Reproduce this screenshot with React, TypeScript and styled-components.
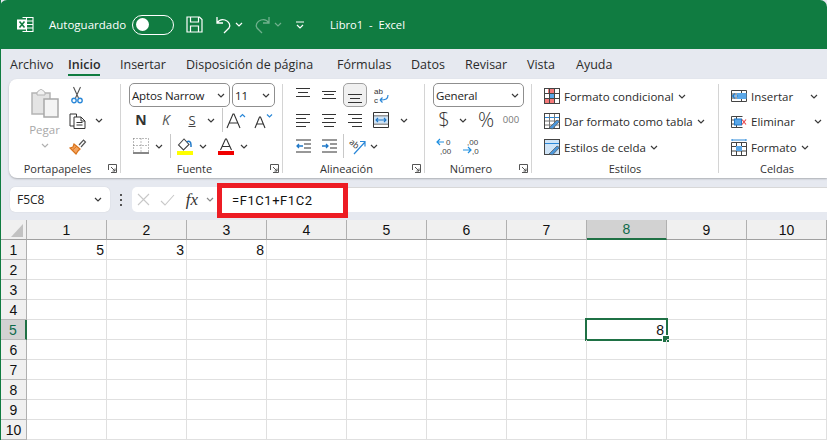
import React from "react";
import styled, { createGlobalStyle } from "styled-components";

const GREEN = "#107c41";
const UI_FONT = `"Open Sans", "Noto Sans", sans-serif`;
const CELL_FONT = `"Liberation Sans", Arial, sans-serif`;

const GlobalStyle = createGlobalStyle`
  html, body { margin: 0; padding: 0; width: 827px; height: 440px; overflow: hidden; background: #fff; }
  * { box-sizing: border-box; }
`;

const Window = styled.div`
  width: 827px;
  height: 440px;
  overflow: hidden;
  display: flex;
  flex-direction: column;
  background: #e6e9f0;
  border-left: 1px solid ${GREEN};
  font-family: ${UI_FONT};
  color: #242424;
`;

/* title bar */
const TitleBar = styled.div`
  height: 49px;
  margin-left: -1px;
  flex: none;
  display: flex;
  align-items: center;
  background: ${GREEN};
  border-radius: 7px 7px 0 0;
  color: #fff;
  padding: 0 0 0 17px;
  font-size: 11.5px;
`;
const AutoLabel = styled.span`
  margin-left: 15px;
  width: 83px;
`;
const Toggle = styled.div`
  width: 42px;
  height: 20px;
  border: 1.5px solid #fff;
  border-radius: 10px;
  padding: 2px 0 0 2.5px;
`;
const Knob = styled.div`
  width: 13px;
  height: 13px;
  border-radius: 50%;
  background: #fff;
`;
const DocTitle = styled.span`
  margin-left: 16px;
  white-space: pre;
  font-size: 11.2px;
`;
const Qat = styled.span<{ $w: number; $dim?: boolean }>`
  width: ${(p) => p.$w}px;
  display: flex;
  justify-content: center;
  opacity: ${(p) => (p.$dim ? 0.4 : 1)};
`;

/* tabs */
const TabRow = styled.div`
  height: 30px;
  flex: none;
  display: flex;
  padding-left: 9px;
  font-size: 12.5px;
`;
const Tab = styled.div<{ $w: number; $active?: boolean }>`
  width: ${(p) => p.$w}px;
  position: relative;
  padding-top: 7px;
  white-space: nowrap;
  font-weight: ${(p) => (p.$active ? 600 : 400)};
  color: #2b2b2b;
  ${(p) =>
    p.$active &&
    `&::after { content: ""; position: absolute; left: 0; width: 32px; top: 25px; height: 2px; background: ${GREEN}; }`}
`;

/* ribbon */
const Ribbon = styled.div`
  height: 99px;
  flex: none;
  margin-left: 8px;
  display: flex;
  background: #fff;
  border-radius: 8px 0 0 8px;
  box-shadow: 0 1px 2px rgba(0, 0, 0, 0.25);
  overflow: hidden;
`;
const Group = styled.div<{ $w: number }>`
  width: ${(p) => p.$w}px;
  flex: none;
  display: flex;
  flex-direction: column;
`;
const GroupBody = styled.div<{ $pl: number }>`
  height: 80px;
  padding: 4px 0 0 ${(p) => p.$pl}px;
`;
const GroupFooter = styled.div`
  height: 19px;
  display: flex;
  align-items: center;
  font-size: 11px;
  color: #333;
`;
const GroupLabel = styled.span`
  flex: 1;
  text-align: center;
  margin-top: -1px;
`;
const Launcher = styled.span`
  width: 14px;
  display: flex;
  padding-left: 2px;
`;
const Divider = styled.div`
  width: 1px;
  flex: none;
  margin: 5px 0;
  background: #d4d4d4;
`;
const Row = styled.div<{ $h?: number }>`
  height: ${(p) => p.$h ?? 26}px;
  display: flex;
  align-items: center;
`;
const Tool = styled.span<{ $w: number; $ml?: number }>`
  width: ${(p) => p.$w}px;
  margin-left: ${(p) => p.$ml ?? 0}px;
  flex: none;
  display: flex;
  align-items: center;
  justify-content: center;
`;
const ToolSep = styled.span<{ $ml?: number; $h?: number }>`
  width: 1px;
  height: ${(p) => p.$h ?? 24}px;
  margin-left: ${(p) => p.$ml ?? 0}px;
  flex: none;
  background: #c8c8c8;
`;
const Combo = styled.div<{ $w: number; $ml?: number }>`
  width: ${(p) => p.$w}px;
  height: 24px;
  margin-left: ${(p) => p.$ml ?? 0}px;
  flex: none;
  display: flex;
  align-items: center;
  justify-content: space-between;
  padding: 0 4px 0 2px;
  border: 1px solid #8f8f8f;
  border-radius: 5px;
  font-size: 11.5px;
  letter-spacing: -0.15px;
  white-space: nowrap;
  color: #222;
`;
const Pressed = styled.span`
  width: 24px;
  height: 24px;
  margin-left: 1px;
  flex: none;
  display: flex;
  align-items: center;
  justify-content: center;
  background: #f0f0f0;
  border: 1px solid #a0a0a0;
  border-radius: 5px;
`;
const ClipGrid = styled.div`
  display: flex;
`;
const PasteCol = styled.div`
  width: 41px;
  display: flex;
  flex-direction: column;
  align-items: center;
  padding-top: 5px;
  color: #a8a8a8;
  font-size: 11.5px;
`;
const PasteLabel = styled.span`
  margin-top: 4px;
  line-height: 16px;
`;
const PasteChevron = styled.span`
  margin-top: 5px;
  display: flex;
`;
const ClipTools = styled.div`
  margin-left: 5px;
  display: flex;
  flex-direction: column;
`;
const StyleRow = styled.div<{ $h?: number }>`
  height: ${(p) => p.$h ?? 26}px;
  display: flex;
  align-items: center;
  gap: 4px;
  font-size: 11.5px;
  white-space: nowrap;
  color: #2b2b2b;
`;
const CellsLabel = styled.span<{ $w: number }>`
  width: ${(p) => p.$w}px;
`;

/* formula bar */
const FormulaBar = styled.div`
  height: 42px;
  flex: none;
  display: flex;
  align-items: flex-start;
  padding: 9px 0 0 9px;
`;
const NameBox = styled.div`
  width: 100px;
  height: 25px;
  flex: none;
  display: flex;
  align-items: center;
  justify-content: space-between;
  padding: 0 8px 0 7px;
  background: #fff;
  border-radius: 5px;
  font-size: 12px;
  box-shadow: 0 0 1px rgba(0, 0, 0, 0.2);
`;
const GripDots = styled.div`
  width: 22px;
  height: 25px;
  flex: none;
  display: flex;
  flex-direction: column;
  align-items: center;
  justify-content: center;
  gap: 3px;
`;
const Dot = styled.span`
  width: 2px;
  height: 2px;
  background: #555;
`;
const FormulaTools = styled.div`
  width: 85px;
  height: 25px;
  flex: none;
  display: flex;
  align-items: center;
  background: #fff;
  border-radius: 5px 0 0 5px;
`;
const FormulaInput = styled.div`
  flex: 1;
  height: 25px;
  position: relative;
  background: #fff;
  border-top: 1px solid #d8d8d8;
`;
const RedBox = styled.div`
  position: absolute;
  left: 0;
  top: -5px;
  width: 131px;
  height: 35px;
  border: 5px solid #ed1c24;
  padding-left: 10px;
  display: flex;
  align-items: center;
  font-family: ${`Roboto, ${CELL_FONT}`};
  font-size: 13px;
  letter-spacing: 0.55px;
  color: #111;
  background: #fff;
`;

/* sheet */
const Sheet = styled.div`
  flex: 1;
  display: grid;
  grid-template-columns: 26px repeat(10, 80px);
  grid-auto-rows: 20px;
  background: #fff;
  font-family: ${CELL_FONT};
  font-size: 14px;
  color: #111;
`;
const Corner = styled.div`
  height: 20px;
  position: relative;
  background: #f0f0f0;
  border-right: 1px solid #b0b0b0;
  border-bottom: 1px solid #a0a0a0;
  &::after {
    content: "";
    position: absolute;
    right: 3px;
    bottom: 2px;
    border-style: solid;
    border-width: 0 0 13px 12px;
    border-color: transparent transparent #c2c2c2 transparent;
  }
`;
const ColHead = styled.div<{ $sel?: boolean }>`
  display: flex;
  align-items: center;
  justify-content: center;
  background: ${(p) => (p.$sel ? "#d2d2d2" : "#f0f0f0")};
  color: ${(p) => (p.$sel ? "#0e6a4a" : "#111")};
  border-right: 1px solid #b0b0b0;
  border-bottom: ${(p) => (p.$sel ? "2px solid #1f7145" : "1px solid #a0a0a0")};
`;
const RowHead = styled.div<{ $sel?: boolean }>`
  display: flex;
  align-items: center;
  justify-content: center;
  background: ${(p) => (p.$sel ? "#d2d2d2" : "#f0f0f0")};
  color: ${(p) => (p.$sel ? "#0e6a4a" : "#111")};
  border-right: ${(p) => (p.$sel ? "2px solid #1f7145" : "1px solid #b0b0b0")};
  border-bottom: 1px solid #b8b8b8;
`;
const Cell = styled.div<{ $active?: boolean }>`
  position: relative;
  display: flex;
  align-items: center;
  justify-content: flex-end;
  padding-right: 2px;
  border-right: 1px solid #e0e0e0;
  border-bottom: 1px solid #e0e0e0;
  ${(p) =>
    p.$active &&
    `&::before { content: ""; box-sizing: border-box; position: absolute; left: -2px; top: -2px; width: 83px; height: 23px; border: 2px solid #1f7145; }
     &::after { content: ""; box-sizing: border-box; position: absolute; right: -3px; bottom: -3px; width: 7px; height: 7px; background: #1f7145; border-left: 1px solid #fff; border-top: 1px solid #fff; }`}
`;

/* icons */
const Svg = styled.svg`
  display: block;
  flex: none;
  overflow: visible;
`;

const Chevron = ({ color = "#3a3a3a" }: { color?: string }) => (
  <Svg width="8" height="5" viewBox="0 0 8 5">
    <path d="M1 1l3 3 3-3" fill="none" stroke={color} strokeWidth="1.2" />
  </Svg>
);

const LauncherIcon = () => (
  <Svg width="9" height="9" viewBox="0 0 9 9">
    <path d="M.5 6V.5H8.500M8.500.5V8.500H3M3 3l4 4M7 4.500V7H4.500" fill="none" stroke="#555" strokeWidth="1" />
  </Svg>
);

const ExcelIcon = () => (
  <Svg width="17" height="17" viewBox="0 0 17 17">
    <path d="M5.500 1.500h10.500v14H5.500M9.500 1.500v14M5.500 5h10.500M5.500 8.500h10.500M5.500 12h10.500" fill="none" stroke="#fff" strokeWidth="1.100" />
    <rect x="0" y="3.500" width="10" height="10" fill="#fff" />
    <path d="M2.500 5.500l5 6M7.500 5.500l-5 6" stroke={GREEN} strokeWidth="1.600" />
  </Svg>
);

const SaveIcon = () => (
  <Svg width="17" height="17" viewBox="0 0 17 17">
    <path d="M1 1h12.500l2.500 2.500V16H1zM4.500 1v5h8V1M4.500 16v-6h8v6" fill="none" stroke="#fff" strokeWidth="1.200" />
  </Svg>
);

const UndoIcon = () => (
  <Svg width="16" height="17" viewBox="0 0 16 17">
    <path d="M1 1v6h6M1 7c2-3 5-4 8-3 4 1.500 6 5 4 8l-5 5" fill="none" stroke="#fff" strokeWidth="1.300" />
  </Svg>
);

const RedoIcon = () => (
  <Svg width="16" height="17" viewBox="0 0 16 17">
    <path d="M15 1v6H9M15 7c-2-3-5-4-8-3-4 1.500-6 5-4 8l5 5" fill="none" stroke="#fff" strokeWidth="1.300" />
  </Svg>
);

const CustomizeIcon = () => (
  <Svg width="8" height="8" viewBox="0 0 8 8">
    <path d="M0 1h8M1 4l3 3 3-3" fill="none" stroke="#fff" strokeWidth="1.200" />
  </Svg>
);

const PasteIcon = () => (
  <Svg width="28" height="30" viewBox="0 0 28 30">
    <path d="M1 5h18v21H1z" fill="#e4e4e4" stroke="#b4b4b4" strokeWidth="1.500" />
    <path d="M6 5c0-2 2-2 2-2 0-2 4-2 4 0 0 0 2 0 2 2v2H6z" fill="#f2f2f2" stroke="#b4b4b4" />
    <rect x="13" y="11" width="14" height="18" fill="#f4f4f4" stroke="#a8a8a8" strokeWidth="1.500" />
  </Svg>
);

const CutIcon = () => (
  <Svg width="12" height="17" viewBox="0 0 12 17">
    <path d="M2.500 0l5 11M9.500 0l-5 11" stroke="#555" strokeWidth="1.100" fill="none" />
    <circle cx="3" cy="13.500" r="2.200" fill="none" stroke="#2b88d8" strokeWidth="1.400" />
    <circle cx="9" cy="13.500" r="2.200" fill="none" stroke="#2b88d8" strokeWidth="1.400" />
  </Svg>
);

const CopyIcon = () => (
  <Svg width="17" height="16" viewBox="0 0 17 16">
    <path d="M5 13H1V1h6.500v3" fill="none" stroke="#333" strokeWidth="1" />
    <path d="M5 4h7l4 4v7.500H5zM12 4v4h4M7.500 9.500h6M7.500 12h6" fill="#fff" stroke="#333" strokeWidth="1" />
  </Svg>
);

const BrushIcon = () => (
  <Svg width="17" height="16" viewBox="0 0 17 16">
    <path d="M10 6l4.500-5 2 2L12 8" fill="none" stroke="#555" strokeWidth="1.200" />
    <path d="M5 5l6 5-2 2-2 3-6-6 3-1z" fill="#f4a460" stroke="#d9731a" strokeWidth="1.200" />
    <path d="M3.500 11L8 7" stroke="#d9731a" />
  </Svg>
);

const BigA = ({ size, up }: { size: number; up: boolean }) => (
  <Svg width="21" height="17" viewBox="0 0 21 17">
    <path d={size > 14 ? "M1 16L7 2h1l6 14M3.500 11h8" : "M2 16L6.500 5h1L12 16M4 12h6"} fill="none" stroke="#333" strokeWidth="1.100" />
    <path d={up ? "M14 5l2.500-2.500L19 5" : "M14 2.500L16.500 5 19 2.500"} fill="none" stroke="#2b88d8" strokeWidth="1.200" />
  </Svg>
);

const BorderIcon = () => (
  <Svg width="16" height="16" viewBox="0 0 16 16">
    <path d="M.5 .5h15M.5 .5v14M15.500 .5v14M8 .5v14M.5 7.500h15" fill="none" stroke="#777" strokeDasharray="1 2" strokeWidth="1" />
    <path d="M0 15h16" stroke="#111" strokeWidth="1.200" />
  </Svg>
);

const FillIcon = () => (
  <Svg width="16" height="17" viewBox="0 0 16 17">
    <path d="M7 1L1.500 7l5 5 5.500-5.500z" fill="#fff" stroke="#444" strokeWidth="1.100" />
    <path d="M10 4c2-2 4 0 4 3v2" fill="none" stroke="#1f78c8" strokeWidth="1.500" />
    <rect x="0" y="13" width="16" height="4" fill="#ffff00" />
  </Svg>
);

const FontColorIcon = () => (
  <Svg width="16" height="17" viewBox="0 0 16 17">
    <path d="M2.500 12L7.500 1h1l5 11M4.500 8.500h7" fill="none" stroke="#333" strokeWidth="1.100" />
    <rect x="0" y="13" width="16" height="4" fill="#f00000" />
  </Svg>
);

const Lines = ({ rows, color = "#333" }: { rows: [number, number, number][]; color?: string }) => (
  <Svg width="15" height="14" viewBox="0 0 15 14">
    {rows.map(([y, a, b]) => (
      <path key={`${y}-${a}`} d={`M${a} ${y + 0.5}H${b}`} stroke={color} strokeWidth="1.100" />
    ))}
  </Svg>
);

const AlignTop = () => <Lines rows={[[0, 0, 14], [4, 2, 12], [8, 0, 14]]} />;
const AlignMid = () => <Lines rows={[[3, 0, 14], [6, 2, 12], [10, 0, 14]]} />;
const AlignBot = () => <Lines rows={[[6, 0, 14], [10, 2, 12], [14, 0, 14]]} />;
const AlignLeft = () => <Lines rows={[[1, 0, 14], [5, 0, 10], [9, 0, 14], [13, 0, 10]]} />;
const AlignCenter = () => <Lines rows={[[1, 0, 14], [5, 2, 12], [9, 0, 14], [13, 2, 12]]} />;
const AlignRight = () => <Lines rows={[[1, 0, 14], [5, 4, 14], [9, 0, 14], [13, 4, 14]]} />;

const WrapIcon = () => (
  <Svg width="16" height="17" viewBox="0 0 16 17">
    <text x="1" y="6.500" fontSize="8" fontFamily={CELL_FONT} fill="#333">ab</text>
    <text x="1" y="16" fontSize="8" fontFamily={CELL_FONT} fill="#333">c</text>
    <path d="M15 8c0 4-2 5-8 5M7 13l2.500-2.500M7 13l2.500 2.500" fill="none" stroke="#2b88d8" strokeWidth="1.200" />
  </Svg>
);

const MergeIcon = () => (
  <Svg width="16" height="16" viewBox="0 0 16 16">
    <path d="M.5.500h15v15H.5zM.5 4h15M.5 12h15" fill="none" stroke="#333" />
    <rect x="1" y="4.500" width="14" height="7" fill="#cfe4f7" />
    <path d="M3 8h10M5 6L3 8l2 2M11 6l2 2-2 2" fill="none" stroke="#1f78c8" strokeWidth="1.100" />
  </Svg>
);

const IndentIcon = ({ more }: { more: boolean }) => (
  <Svg width="15" height="14" viewBox="0 0 15 14">
    <path d="M0 1h15M8 5h7M8 9h7M0 13h15" stroke="#333" strokeWidth="1.100" />
    <path d={more ? "M0 7h6M4 5l2 2-2 2" : "M1 7h6M3 5L1 7l2 2"} fill="none" stroke="#1f78c8" strokeWidth="1.300" />
  </Svg>
);

const OrientIcon = () => (
  <Svg width="17" height="17" viewBox="0 0 17 17">
    <text x="0" y="8" fontSize="8.500" fontFamily={UI_FONT} fill="#333" transform="rotate(40 4 6)">ab</text>
    <path d="M5 16L16 4M11 3.500h5v5" fill="none" stroke="#2b88d8" strokeWidth="1.200" />
  </Svg>
);

const DecimalIcon = ({ more }: { more: boolean }) => (
  <Svg width="16" height="16" viewBox="0 0 16 16">
    <text x={more ? 4 : 9} y="6.500" fontSize="8" fontFamily={CELL_FONT} fill="#444">{more ? ",00" : "0"}</text>
    <text x={more ? 9 : 3} y="16" fontSize="8" fontFamily={CELL_FONT} fill="#444">{more ? ",0" : ",00"}</text>
    <path d={more ? "M0 12h8M5 9l3 3-3 3" : "M0 4h7M3 1L0 4l3 3"} fill="none" stroke="#1f8fe0" strokeWidth="1.200" />
  </Svg>
);

const CondFormatIcon = () => (
  <Svg width="16" height="16" viewBox="0 0 16 16">
    <rect x=".5" y=".5" width="15" height="15" fill="#fff" stroke="#444" />
    <rect x="4" y="1" width="6" height="5" fill="#f47a7a" />
    <rect x="1" y="10" width="5" height="5" fill="#f47a7a" />
    <rect x="6" y="10" width="5" height="5" fill="#f47a7a" />
    <rect x="5" y="6" width="5" height="4" fill="#5aa7e8" />
    <path d="M5.500 1v14M10.500 1v14M1 5.500h14M1 10.500h14" stroke="#444" />
  </Svg>
);

const TableStyleIcon = ({ filled }: { filled: boolean }) => (
  <Svg width="16" height="17" viewBox="0 0 16 17">
    <rect x=".5" y=".5" width="15" height="15" fill={filled ? "#cfe4f7" : "#fff"} stroke="#444" />
    <path d="M1 4.500h14" stroke="#2b88d8" />
    {!filled && <path d="M5.500 1v14M10.500 1v14M1 8h14M1 12h14" stroke="#777" />}
    <path d="M5 15l8-8 2.500 1.500-7 7.500z" fill="#4a97dc" stroke="#555" strokeWidth=".7" />
  </Svg>
);

const InsertIcon = () => (
  <Svg width="16" height="16" viewBox="0 0 16 16">
    <path d="M.5 2.500h15v11H.5zM10.500 2.500v11M.5 6h6M.5 10h6" fill="none" stroke="#444" />
    <rect x="6" y="5" width="9.500" height="6" fill="#5aa7e8" />
    <path d="M1 8h6M4 5.500L1.500 8 4 10.500" fill="#fff" stroke="#1f78c8" strokeWidth="1.200" />
  </Svg>
);

const DeleteIcon = () => (
  <Svg width="16" height="16" viewBox="0 0 16 16">
    <path d="M.5 2.500h11M.5 13.500h11M.5 2.500v11M5.500 2.500V5M5.500 11v2.500M.5 6h3M.5 10h3" fill="none" stroke="#444" />
    <rect x="3.500" y="5" width="7" height="6" fill="#5aa7e8" stroke="#1f78c8" />
    <path d="M11 5.500l4 5M15 5.500l-4 5" stroke="#e8474c" strokeWidth="1.200" />
  </Svg>
);

const FormatIcon = () => (
  <Svg width="16" height="17" viewBox="0 0 16 17">
    <path d="M.5 3.500h15v13H.5zM5.500 3.500v13M10.500 3.500v13M.5 7.500h15M.5 12h15" fill="none" stroke="#444" />
    <rect x="5" y="7" width="6" height="5" fill="#5aa7e8" />
    <path d="M1 1h14M1 0v2M15 0v2" stroke="#2b88d8" />
  </Svg>
);

const CancelIcon = () => (
  <Svg width="13" height="13" viewBox="0 0 13 13">
    <path d="M1 1l11 11M12 1L1 12" stroke="#c8c8c8" strokeWidth="1.100" />
  </Svg>
);
const ConfirmIcon = () => (
  <Svg width="15" height="12" viewBox="0 0 15 12">
    <path d="M1 7l4 4 9-10" fill="none" stroke="#c8c8c8" strokeWidth="1.100" />
  </Svg>
);
const FxLabel = styled.span`
  font-family: "Liberation Serif", serif;
  font-style: italic;
  font-size: 17px;
  color: #333;
`;
const SmallText = styled.span<{ $size: number; $weight?: number; $italic?: boolean; $underline?: boolean; $color?: string }>`
  font-size: ${(p) => p.$size}px;
  font-weight: ${(p) => p.$weight ?? 400};
  font-style: ${(p) => (p.$italic ? "italic" : "normal")};
  text-decoration: ${(p) => (p.$underline ? "underline" : "none")};
  color: ${(p) => p.$color ?? "#333"};
  line-height: 1;
`;

const tabs: [string, number][] = [
  ["Archivo", 58],
  ["Inicio", 52],
  ["Insertar", 66],
  ["Disposición de página", 151],
  ["Fórmulas", 74],
  ["Datos", 54],
  ["Revisar", 62],
  ["Vista", 49],
  ["Ayuda", 50],
];

const columns = [1, 2, 3, 4, 5, 6, 7, 8, 9, 10];
const values: Record<string, string> = { "1-1": "5", "1-2": "3", "1-3": "8", "5-8": "8" };

export default function App() {
  return (
    <>
      <GlobalStyle />
      <Window>
        <TitleBar>
          <ExcelIcon />
          <AutoLabel>Autoguardado</AutoLabel>
          <Toggle><Knob /></Toggle>
          <Qat $w={12} />
          <SaveIcon />
          <Qat $w={13} />
          <UndoIcon />
          <Qat $w={13}><Chevron color="#fff" /></Qat>
          <Qat $w={9} />
          <Qat $w={16} $dim><RedoIcon /></Qat>
          <Qat $w={16} $dim><Chevron color="#fff" /></Qat>
          <Qat $w={28}><CustomizeIcon /></Qat>
          <DocTitle>Libro1  -  Excel</DocTitle>
        </TitleBar>

        <TabRow>
          {tabs.map(([name, w]) => (
            <Tab key={name} $w={w} $active={name === "Inicio"}>{name}</Tab>
          ))}
        </TabRow>

        <Ribbon>
          <Group $w={111}>
            <GroupBody $pl={15}>
              <ClipGrid>
                <PasteCol>
                  <PasteIcon />
                  <PasteLabel>Pegar</PasteLabel>
                  <PasteChevron><Chevron color="#b0b0b0" /></PasteChevron>
                </PasteCol>
                <ClipTools>
                  <Row $h={25}><Tool $w={14}><CutIcon /></Tool></Row>
                  <Row $h={25}>
                    <Tool $w={14}><CopyIcon /></Tool>
                    <Tool $w={20} $ml={5}><Chevron /></Tool>
                  </Row>
                  <Row $h={27}><Tool $w={14}><BrushIcon /></Tool></Row>
                </ClipTools>
              </ClipGrid>
            </GroupBody>
            <GroupFooter>
              <GroupLabel>Portapapeles</GroupLabel>
              <Launcher><LauncherIcon /></Launcher>
            </GroupFooter>
          </Group>
          <Divider />

          <Group $w={161}>
            <GroupBody $pl={8}>
              <Row $h={24}>
                <Combo $w={101}>Aptos Narrow<Chevron /></Combo>
                <Combo $w={43} $ml={2}>11<Chevron /></Combo>
              </Row>
              <Row>
                <Tool $w={24}><SmallText $size={14} $weight={700}>N</SmallText></Tool>
                <Tool $w={26}><SmallText $size={14} $italic $color="#555">K</SmallText></Tool>
                <Tool $w={26}><SmallText $size={13} $underline $color="#444">S</SmallText></Tool>
                <Tool $w={12}><Chevron /></Tool>
                <ToolSep $ml={5} />
                <Tool $w={26}><BigA size={18} up /></Tool>
                <Tool $w={26} $ml={1}><BigA size={14} up={false} /></Tool>
              </Row>
              <Row>
                <Tool $w={24}><BorderIcon /></Tool>
                <Tool $w={12}><Chevron /></Tool>
                <ToolSep $ml={5} />
                <Tool $w={28}><FillIcon /></Tool>
                <Tool $w={8}><Chevron /></Tool>
                <Tool $w={30} $ml={4}><FontColorIcon /></Tool>
                <Tool $w={6}><Chevron /></Tool>
              </Row>
            </GroupBody>
            <GroupFooter>
              <GroupLabel>Fuente</GroupLabel>
              <Launcher><LauncherIcon /></Launcher>
            </GroupFooter>
          </Group>
          <Divider />

          <Group $w={141}>
            <GroupBody $pl={7}>
              <Row $h={24}>
                <Tool $w={26}><AlignTop /></Tool>
                <Tool $w={26}><AlignMid /></Tool>
                <Pressed><AlignBot /></Pressed>
                <Tool $w={28}><WrapIcon /></Tool>
              </Row>
              <Row>
                <Tool $w={26}><AlignLeft /></Tool>
                <Tool $w={26}><AlignCenter /></Tool>
                <Tool $w={26}><AlignRight /></Tool>
                <Tool $w={26}><MergeIcon /></Tool>
                <Tool $w={20}><Chevron /></Tool>
              </Row>
              <Row>
                <Tool $w={26}><IndentIcon more={false} /></Tool>
                <Tool $w={26}><IndentIcon more /></Tool>
                <ToolSep $ml={1} />
                <Tool $w={26}><OrientIcon /></Tool>
                <Tool $w={8}><Chevron /></Tool>
              </Row>
            </GroupBody>
            <GroupFooter>
              <GroupLabel>Alineación</GroupLabel>
              <Launcher><LauncherIcon /></Launcher>
            </GroupFooter>
          </Group>
          <Divider />

          <Group $w={106}>
            <GroupBody $pl={8}>
              <Row $h={24}>
                <Combo $w={91}>General<Chevron /></Combo>
              </Row>
              <Row>
                <Tool $w={22}><SmallText $size={20} $weight={300}>$</SmallText></Tool>
                <Tool $w={16}><Chevron /></Tool>
                <Tool $w={30}><SmallText $size={20} $weight={300}>%</SmallText></Tool>
                <Tool $w={20}><SmallText $size={9.5} $color="#777">000</SmallText></Tool>
              </Row>
              <Row>
                <Tool $w={23}><DecimalIcon more={false} /></Tool>
                <Tool $w={30}><DecimalIcon more /></Tool>
              </Row>
            </GroupBody>
            <GroupFooter>
              <GroupLabel>Número</GroupLabel>
              <Launcher><LauncherIcon /></Launcher>
            </GroupFooter>
          </Group>
          <Divider />

          <Group $w={186}>
            <GroupBody $pl={12}>
              <StyleRow><CondFormatIcon />Formato condicional<Chevron /></StyleRow>
              <StyleRow $h={25}><TableStyleIcon filled={false} />Dar formato como tabla<Chevron /></StyleRow>
              <StyleRow><TableStyleIcon filled />Estilos de celda<Chevron /></StyleRow>
            </GroupBody>
            <GroupFooter>
              <GroupLabel>Estilos</GroupLabel>
            </GroupFooter>
          </Group>
          <Divider />

          <Group $w={116}>
            <GroupBody $pl={12}>
              <StyleRow><InsertIcon /><CellsLabel $w={55}>Insertar</CellsLabel><Chevron /></StyleRow>
              <StyleRow $h={25}><DeleteIcon /><CellsLabel $w={59}>Eliminar</CellsLabel><Chevron /></StyleRow>
              <StyleRow><FormatIcon />Formato<Chevron /></StyleRow>
            </GroupBody>
            <GroupFooter>
              <GroupLabel>Celdas</GroupLabel>
            </GroupFooter>
          </Group>
        </Ribbon>

        <FormulaBar>
          <NameBox>F5C8<Chevron /></NameBox>
          <GripDots><Dot /><Dot /><Dot /></GripDots>
          <FormulaTools>
            <Tool $w={22}><CancelIcon /></Tool>
            <Tool $w={26}><ConfirmIcon /></Tool>
            <Tool $w={24}><FxLabel>fx</FxLabel></Tool>
            <Tool $w={12}><Chevron color="#888" /></Tool>
          </FormulaTools>
          <FormulaInput>
            <RedBox>=F1C1+F1C2</RedBox>
          </FormulaInput>
        </FormulaBar>

        <Sheet>
          <Corner />
          {columns.map((c) => (
            <ColHead key={c} $sel={c === 8}>{c}</ColHead>
          ))}
          {columns.map((r) => (
            <React.Fragment key={r}>
              <RowHead $sel={r === 5}>{r}</RowHead>
              {columns.map((c) => (
                <Cell key={c} $active={r === 5 && c === 8}>{values[`${r}-${c}`]}</Cell>
              ))}
            </React.Fragment>
          ))}
        </Sheet>
      </Window>
    </>
  );
}
